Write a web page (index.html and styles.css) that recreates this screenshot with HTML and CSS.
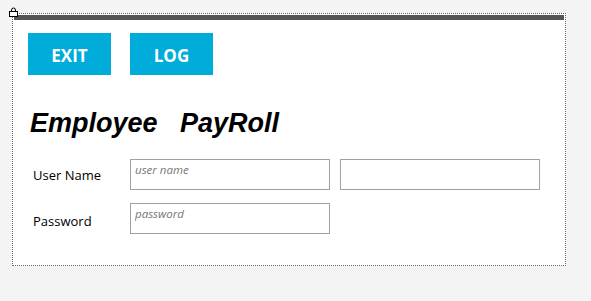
FILE: index.html
```html
<!DOCTYPE html>
<html lang="en">
<head>
    <meta charset="UTF-8">
    <meta name="viewport" content="width=device-width, initial-scale=1.0">
    <title>Employee PayRoll</title>
    <link rel="stylesheet" href="styles.css">
</head>
<body>
    <div class="panel">
        <svg class="lock" width="9" height="10" viewBox="0 0 9 10">
            <path d="M2.5 4.5 V3 A2 2 0 0 1 6.5 3 V4.5" fill="none" stroke="#000" stroke-width="1"/>
            <rect x="0.5" y="4.5" width="8" height="5" fill="#fff" stroke="#000" stroke-width="1"/>
        </svg>
        <div class="topbar"></div>

        <div class="content">
            <div class="actions">
                <button class="button" type="button">EXIT</button>
                <button class="button" type="button">LOG</button>
            </div>

            <h1 class="title">Employee&nbsp;&nbsp;&nbsp;PayRoll</h1>

            <div class="form-row">
                <label class="form-label">User Name</label>
                <input type="text" class="form-control" placeholder="user name">
                <input type="text" class="form-control">
            </div>
            <div class="form-row">
                <label class="form-label label-password">Password</label>
                <input type="password" class="form-control" placeholder="password">
            </div>
        </div>
    </div>
</body>
</html>
```

FILE: styles.css
```css
* {
    box-sizing: border-box;
}

html,
body {
    margin: 0;
    padding: 0;
}

body {
    background-color: #f4f4f4;
    font-family: "Open Sans", sans-serif;
}

.panel {
    position: relative;
    margin: 13px 0 0 12px;
    width: 554px;
    height: 253px;
    padding: 1px;
    border: 1px dotted #666;
    background-color: #fff;
}

.lock {
    position: absolute;
    left: -4px;
    top: -7px;
}

.topbar {
    height: 5px;
    background-color: #555;
}

.content {
    padding: 13px 0 0 14px;
}

.actions {
    display: flex;
    gap: 19px;
}

.button {
    width: 83px;
    height: 42px;
    border: none;
    background-color: #00acd9;
    color: #fff;
    font-family: "Open Sans", sans-serif;
    font-size: 17px;
    font-weight: 700;
    padding: 2px 0 0;
    cursor: pointer;
}

.title {
    margin: 33px 0 21px 2px;
    font-family: "Liberation Sans", Arial, sans-serif;
    font-size: 27px;
    font-style: italic;
    font-weight: 700;
    line-height: 30px;
    color: #000;
}

.form-row {
    display: flex;
    align-items: center;
    gap: 10px;
    margin-bottom: 13px;
}

.form-label {
    width: 92px;
    padding: 1px 0 0 5px;
    font-size: 13px;
    color: #000;
}

.form-label.label-password {
    padding-top: 4px;
}

.form-control {
    width: 200px;
    height: 31px;
    padding: 2px 4px 12px;
    border: 1px solid #a0a0a0;
    outline: none;
    font-family: "Open Sans", sans-serif;
    font-size: 11.5px;
    line-height: 15px;
}

.form-control::placeholder {
    color: #777;
    font-style: italic;
}
```
